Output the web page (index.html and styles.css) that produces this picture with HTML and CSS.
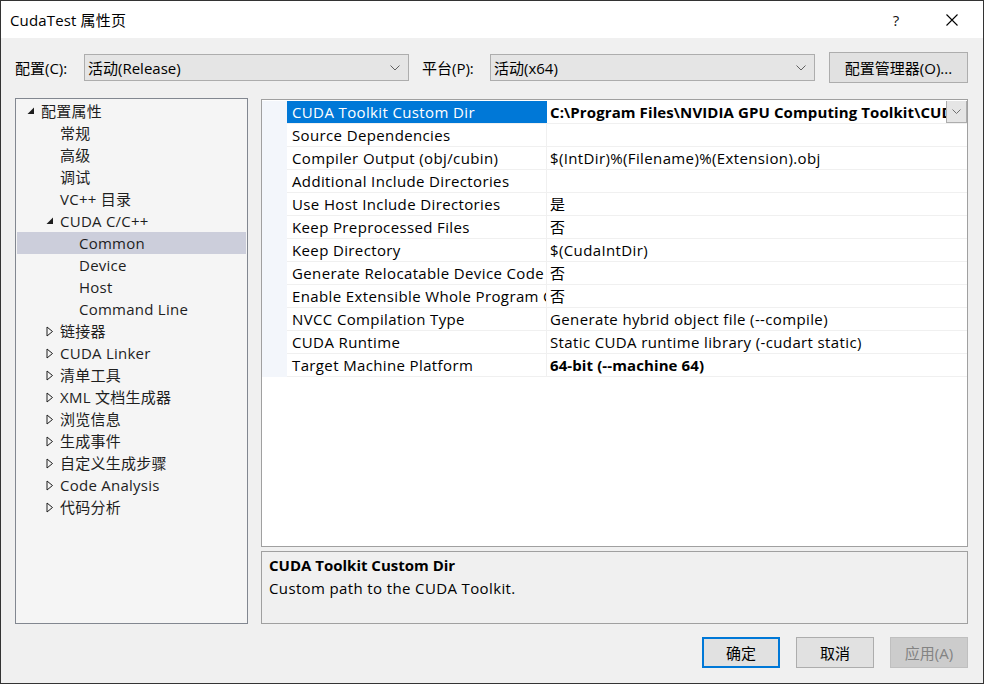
FILE: index.html
```html
<!DOCTYPE html>
<html lang="zh-CN">
<head>
<meta charset="utf-8">
<title>CudaTest 属性页</title>
<link rel="stylesheet" href="styles.css">
</head>
<body>
<div class="window">
  <div class="titlebar">
    <span class="title">CudaTest 属性页</span>
    <span class="tb-help">?</span>
    <span class="tb-close"><svg width="12" height="12" viewBox="0 0 12 12"><path d="M0.5 0.5 L11.5 11.5 M11.5 0.5 L0.5 11.5" stroke="#000" stroke-width="1.1" fill="none"/></svg></span>
  </div>
  <div class="content">
    <div class="config-row">
      <span class="lbl lbl-config">配置(C):</span>
      <div class="combo combo-config"><span class="combo-text">活动(Release)</span><svg class="chev" width="10" height="6" viewBox="0 0 10 6"><path d="M0.5 0.5 L5 5 L9.5 0.5" stroke="#606060" stroke-width="1" fill="none"/></svg></div>
      <span class="lbl lbl-platform">平台(P):</span>
      <div class="combo combo-platform"><span class="combo-text">活动(x64)</span><svg class="chev" width="10" height="6" viewBox="0 0 10 6"><path d="M0.5 0.5 L5 5 L9.5 0.5" stroke="#606060" stroke-width="1" fill="none"/></svg></div>
      <button class="btn btn-manager">配置管理器(O)...</button>
    </div>
    <div class="main">
      <div class="tree">
        <div class="node l0"><span class="arrow"><svg width="8" height="8" viewBox="0 0 8 8"><polygon points="7,0.5 7,7 0.5,7" fill="#1e1e1e"/></svg></span><span>配置属性</span></div>
        <div class="node l1"><span class="arrow"></span><span>常规</span></div>
        <div class="node l1"><span class="arrow"></span><span>高级</span></div>
        <div class="node l1"><span class="arrow"></span><span>调试</span></div>
        <div class="node l1"><span class="arrow"></span><span>VC++ 目录</span></div>
        <div class="node l1"><span class="arrow"><svg width="8" height="8" viewBox="0 0 8 8"><polygon points="7,0.5 7,7 0.5,7" fill="#1e1e1e"/></svg></span><span>CUDA C/C++</span></div>
        <div class="node l2 selected"><span class="arrow"></span><span>Common</span></div>
        <div class="node l2"><span class="arrow"></span><span>Device</span></div>
        <div class="node l2"><span class="arrow"></span><span>Host</span></div>
        <div class="node l2"><span class="arrow"></span><span>Command Line</span></div>
        <div class="node l1"><span class="arrow"><svg class="tri-out" width="8" height="11" viewBox="0 0 8 11"><polygon points="1,1 6.5,5.5 1,10" fill="none" stroke="#1e1e1e" stroke-width="1"/></svg></span><span>链接器</span></div>
        <div class="node l1"><span class="arrow"><svg class="tri-out" width="8" height="11" viewBox="0 0 8 11"><polygon points="1,1 6.5,5.5 1,10" fill="none" stroke="#1e1e1e" stroke-width="1"/></svg></span><span>CUDA Linker</span></div>
        <div class="node l1"><span class="arrow"><svg class="tri-out" width="8" height="11" viewBox="0 0 8 11"><polygon points="1,1 6.5,5.5 1,10" fill="none" stroke="#1e1e1e" stroke-width="1"/></svg></span><span>清单工具</span></div>
        <div class="node l1"><span class="arrow"><svg class="tri-out" width="8" height="11" viewBox="0 0 8 11"><polygon points="1,1 6.5,5.5 1,10" fill="none" stroke="#1e1e1e" stroke-width="1"/></svg></span><span>XML 文档生成器</span></div>
        <div class="node l1"><span class="arrow"><svg class="tri-out" width="8" height="11" viewBox="0 0 8 11"><polygon points="1,1 6.5,5.5 1,10" fill="none" stroke="#1e1e1e" stroke-width="1"/></svg></span><span>浏览信息</span></div>
        <div class="node l1"><span class="arrow"><svg class="tri-out" width="8" height="11" viewBox="0 0 8 11"><polygon points="1,1 6.5,5.5 1,10" fill="none" stroke="#1e1e1e" stroke-width="1"/></svg></span><span>生成事件</span></div>
        <div class="node l1"><span class="arrow"><svg class="tri-out" width="8" height="11" viewBox="0 0 8 11"><polygon points="1,1 6.5,5.5 1,10" fill="none" stroke="#1e1e1e" stroke-width="1"/></svg></span><span>自定义生成步骤</span></div>
        <div class="node l1"><span class="arrow"><svg class="tri-out" width="8" height="11" viewBox="0 0 8 11"><polygon points="1,1 6.5,5.5 1,10" fill="none" stroke="#1e1e1e" stroke-width="1"/></svg></span><span>Code Analysis</span></div>
        <div class="node l1"><span class="arrow"><svg class="tri-out" width="8" height="11" viewBox="0 0 8 11"><polygon points="1,1 6.5,5.5 1,10" fill="none" stroke="#1e1e1e" stroke-width="1"/></svg></span><span>代码分析</span></div>
      </div>
      <div class="right">
        <div class="grid">
          <div class="grid-body">
            <div class="gutter"></div>
            <div class="rows">
              <div class="row selected"><div class="name">CUDA Toolkit Custom Dir</div><div class="val bold"><span class="val-text">C:\Program Files\NVIDIA GPU Computing Toolkit\CUDA\v11.0</span><span class="dd"><svg width="9" height="5" viewBox="0 0 9 5"><path d="M0.5 0.5 L4.5 4.5 L8.5 0.5" stroke="#707070" stroke-width="1" fill="none"/></svg></span></div></div>
              <div class="row"><div class="name">Source Dependencies</div><div class="val"></div></div>
              <div class="row"><div class="name">Compiler Output (obj/cubin)</div><div class="val">$(IntDir)%(Filename)%(Extension).obj</div></div>
              <div class="row"><div class="name">Additional Include Directories</div><div class="val"></div></div>
              <div class="row"><div class="name">Use Host Include Directories</div><div class="val">是</div></div>
              <div class="row"><div class="name">Keep Preprocessed Files</div><div class="val">否</div></div>
              <div class="row"><div class="name">Keep Directory</div><div class="val">$(CudaIntDir)</div></div>
              <div class="row"><div class="name">Generate Relocatable Device Code</div><div class="val">否</div></div>
              <div class="row"><div class="name">Enable Extensible Whole Program Compilation</div><div class="val">否</div></div>
              <div class="row"><div class="name">NVCC Compilation Type</div><div class="val">Generate hybrid object file (--compile)</div></div>
              <div class="row"><div class="name">CUDA Runtime</div><div class="val">Static CUDA runtime library (-cudart static)</div></div>
              <div class="row"><div class="name">Target Machine Platform</div><div class="val bold">64-bit (--machine 64)</div></div>
            </div>
          </div>
        </div>
        <div class="desc">
          <div class="desc-title">CUDA Toolkit Custom Dir</div>
          <div class="desc-text">Custom path to the CUDA Toolkit.</div>
        </div>
      </div>
    </div>
    <div class="buttons">
      <button class="btn btn-dlg btn-default">确定</button>
      <button class="btn btn-dlg">取消</button>
      <button class="btn btn-dlg btn-disabled">应用(A)</button>
    </div>
  </div>
</div>
</body>
</html>
```

FILE: styles.css
```css
* { box-sizing: border-box; }
html, body { margin: 0; padding: 0; }
body {
  width: 984px;
  height: 684px;
  overflow: hidden;
  font-family: "Open Sans", "Noto Sans CJK SC", sans-serif;
  font-size: 15px;
  color: #000;
  background: #f0f0f0;
}
.window {
  width: 984px;
  height: 684px;
  border: 1px solid #333;
  display: flex;
  flex-direction: column;
  background: #f0f0f0;
}
.titlebar {
  height: 37px;
  background: #fff;
  display: flex;
  align-items: center;
  padding-left: 9px;
  flex: none;
}
.title { font-size: 15px; line-height: 20px; flex: 1; letter-spacing: 0.15px; }
.tb-help { width: 20px; text-align: center; font-size: 15px; margin-right: 36px; color: #111; }
.tb-close { width: 20px; display: flex; justify-content: center; margin-right: 21px; }
.content {
  flex: 1;
  display: flex;
  flex-direction: column;
  padding: 14px 15px 15px 14px;
  min-width: 0;
}
.config-row {
  display: flex;
  align-items: center;
  height: 31px;
}
.lbl { line-height: 20px; white-space: nowrap; }
.lbl-config { width: 69px; }
.lbl-platform { width: 68px; margin-left: 13px; }
.combo {
  height: 27px;
  width: 325px;
  background: #e5e5e5;
  border: 1px solid #adadad;
  display: flex;
  align-items: center;
  padding: 0 8px 0 3px;
}
.combo-text { flex: 1; line-height: 20px; white-space: nowrap; }
.chev { flex: none; }
.btn {
  font-family: "Open Sans", "Noto Sans CJK SC", sans-serif;
  font-size: 15px;
  color: #000;
  background: #e1e1e1;
  border: 1px solid #adadad;
  padding: 0;
  margin: 0;
}
.btn-manager {
  margin-left: 14px;
  width: 139px;
  height: 31px;
}
.main {
  display: flex;
  margin-top: 15px;
  height: 526px;
  min-width: 0;
}
.tree {
  width: 233px;
  flex: none;
  background: #f5f5f5;
  border: 1px solid #828790;
  padding: 1px 1px;
}
.node {
  height: 22px;
  display: flex;
  align-items: center;
  line-height: 22px;
  white-space: nowrap;
  color: #1e1e1e;
  letter-spacing: 0.25px;
}
.node.l0 { padding-left: 10px; }
.node.l1 { padding-left: 29px; }
.node.l2 { padding-left: 48px; }
.node.selected { background: #cccedb; }
.arrow {
  width: 14px;
  flex: none;
  display: flex;
  align-items: center;
}
.arrow svg { display: block; }
.right {
  flex: 1;
  min-width: 0;
  margin-left: 13px;
  display: flex;
  flex-direction: column;
  padding-top: 1px;
}
.grid {
  height: 448px;
  background: #fff;
  border: 1px solid #a0a0a0;
  padding-top: 1px;
  overflow: hidden;
}
.grid-body { display: flex; min-width: 0; }
.gutter {
  width: 25px;
  height: 276px;
  background: #f3f6fb;
  flex: none;
}
.rows { flex: 1; min-width: 0; }
.row {
  display: flex;
  height: 23px;
  border-bottom: 1px solid #f0f0f0;
  letter-spacing: 0.37px;
}
.name {
  width: 260px;
  flex: none;
  border-right: 1px solid #f0f0f0;
  padding-left: 5px;
  line-height: 22px;
  white-space: nowrap;
  overflow: hidden;
}
.row.selected .name {
  background: #0078d7;
  color: #fff;
  border-right-color: #0078d7;
}
.val {
  flex: 1;
  min-width: 0;
  padding-left: 3px;
  line-height: 22px;
  white-space: nowrap;
  overflow: hidden;
  display: flex;
}
.val.bold { font-weight: 700; letter-spacing: 0.1px; }
.val-text { flex: 1; min-width: 0; overflow: hidden; white-space: nowrap; }
.dd {
  width: 21px;
  height: 23px;
  margin-top: -1px;
  flex: none;
  background: #e5e5e5;
  border: 1px solid #adadad;
  display: flex;
  align-items: center;
  justify-content: center;
}
.desc {
  margin-top: 4px;
  height: 73px;
  background: #f0f0f0;
  border: 1px solid #a0a0a0;
  padding: 2px 7px;
}
.desc-title { font-weight: 700; line-height: 23px; }
.desc-text { line-height: 23px; letter-spacing: 0.37px; }
.buttons {
  margin-top: 13px;
  display: flex;
  justify-content: flex-end;
  gap: 16px;
  padding-right: 0;
}
.btn-dlg { width: 78px; height: 31px; }
.btn-default { border: 2px solid #0078d7; }
.btn-disabled { background: #cccccc; border-color: #bfbfbf; color: #838383; }
```
